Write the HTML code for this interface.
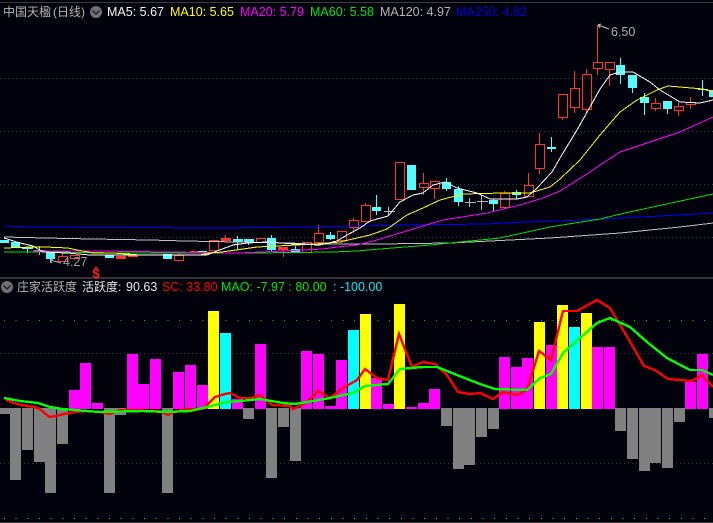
<!DOCTYPE html>
<html><head><meta charset="utf-8"><style>
html,body{margin:0;padding:0;background:#02020d;overflow:hidden}
svg{display:block}
text{font-family:"Liberation Sans","Noto Sans CJK SC",sans-serif;font-size:12.5px}
.c{font-size:12px}
.l{fill:none;shape-rendering:crispEdges}
.r{fill:#ff00ff}
</style></head><body>
<svg width="713" height="523" viewBox="0 0 713 523" xmlns="http://www.w3.org/2000/svg">
<rect width="713" height="523" fill="#02020d"/>
<g shape-rendering="crispEdges">
<rect x="0" y="2" width="713" height="1" fill="#3a3a3a"/>
<rect x="0" y="277" width="713" height="2" fill="#333"/>
<rect x="0" y="522" width="713" height="1" fill="#3a3a3a"/>
<path d="M0 78.5H713M0 131.5H713M0 184.5H713M0 237.5H713M0 353.5H713M0 463.5H713" stroke="#3c3c3c" stroke-dasharray="1 3" fill="none"/>
<path d="M4 320.500H713" stroke="#00e000" stroke-dasharray="1 10.67" fill="none"/>
<path d="M4 518.500H713" stroke="#00e8e8" stroke-dasharray="1 10.67" fill="none"/>
</g>
<!-- candles red -->
<g shape-rendering="crispEdges" fill="none" stroke="#ff3232">
<path d="M58.5 256.5h9v5h-9zM70.5 255.5h9v3h-9zM174.5 255.5h9v5h-9zM209.5 240.5h9v10h-9zM256.5 238.5h9v4h-9zM302.5 242.5h9v10h-9zM314.5 233.5h9v9h-9zM337.5 231.5h9v9h-9zM349.5 220.5h9v7h-9zM361.5 205.5h9v16h-9zM395.5 162.5h9v37h-9zM419.5 183.5h9v4h-9zM430.5 181.5h9v7h-9zM500.5 193.5h9v14h-9zM524.5 185.5h9v11h-9zM535.5 144.5h9v24h-9zM558.5 94.5h9v23h-9zM570.5 88.5h9v19h-9zM582.5 74.5h9v35h-9zM593.5 62.5h9v6h-9zM605.5 62.5h9v7h-9zM651.5 103.5h9v5h-9zM674.5 106.5h9v4h-9zM686.5 102.5h9v2h-9z"/>
<path d="M62.5 253v3M179 252v3M318.5 225v8M318.5 243v3M341.5 241v2M353.5 218v2M353.5 228v5M365.5 203v2M423.5 173v10M423.5 188v7M434.5 189v10M504.5 191v2M504.5 208v1M528.5 173v12M539.5 133v11M539.5 169v5M562.5 118v2M574.5 71v17M574.5 108v5M586.5 69v5M586.5 110v4M597.5 25v37M597.5 69v6M609.5 70v16M655.5 98v5M655.5 109v2M678.5 102v4M678.5 111v5M690.5 97v5M690.5 105v4"/>
</g>
<g shape-rendering="crispEdges" fill="#ff3232">
<rect x="116" y="256" width="10" height="3"/><rect x="128" y="255" width="10" height="2"/><rect x="190" y="251" width="9" height="2"/>
<rect x="221" y="238" width="10" height="3"/><rect x="225" y="235" width="1" height="7"/>
<rect x="278" y="247" width="10" height="3"/><rect x="283" y="250" width="1" height="7"/>
</g>
<!-- candles cyan -->
<g shape-rendering="crispEdges" fill="#54fcfc">
<rect x="0" y="240" width="9" height="3"/><rect x="11" y="242" width="9" height="6"/><rect x="22" y="247" width="11" height="2"/><rect x="27" y="247" width="1" height="6"/>
<rect x="46" y="252" width="9" height="7"/><rect x="50" y="259" width="1" height="4"/>
<rect x="105" y="255" width="9" height="3"/><rect x="163" y="254" width="9" height="5"/><rect x="198" y="251" width="9" height="2"/>
<rect x="233" y="239" width="10" height="3"/><rect x="237" y="236" width="1" height="13"/>
<rect x="244" y="239" width="10" height="3"/><rect x="248" y="242" width="1" height="3"/>
<rect x="267" y="238" width="9" height="12"/><rect x="271" y="235" width="1" height="17"/>
<rect x="291" y="249" width="9" height="3"/><rect x="295" y="246" width="1" height="4"/>
<rect x="326" y="235" width="9" height="4"/><rect x="330" y="232" width="1" height="8"/>
<rect x="372" y="207" width="9" height="4"/><rect x="376" y="195" width="1" height="20"/>
<rect x="407" y="165" width="9" height="25"/>
<rect x="442" y="182" width="9" height="7"/><rect x="446" y="178" width="1" height="13"/>
<rect x="454" y="189" width="9" height="13"/><rect x="458" y="186" width="1" height="20"/>
<rect x="489" y="200" width="9" height="4"/><rect x="493" y="199" width="1" height="12"/>
<rect x="512" y="192" width="9" height="3"/><rect x="516" y="190" width="1" height="9"/>
<rect x="547" y="147" width="9" height="2"/><rect x="551" y="137" width="1" height="15"/>
<rect x="616" y="65" width="9" height="10"/><rect x="620" y="58" width="1" height="26"/>
<rect x="628" y="75" width="9" height="13"/><rect x="632" y="88" width="1" height="5"/>
<rect x="640" y="97" width="9" height="6"/><rect x="644" y="93" width="1" height="22"/>
<rect x="663" y="101" width="9" height="8"/><rect x="667" y="109" width="1" height="5"/>
<rect x="698" y="89" width="10" height="1"/><rect x="702" y="80" width="1" height="16"/>
<rect x="709" y="90" width="4" height="7"/>
</g>
<g shape-rendering="crispEdges" fill="#b8b8b8">
<rect x="34" y="250" width="11" height="1"/><rect x="39" y="246" width="1" height="9"/>
<rect x="384" y="211" width="11" height="1"/><rect x="388" y="207" width="1" height="9"/>
<rect x="465" y="202" width="11" height="1"/><rect x="469" y="198" width="1" height="9"/>
<rect x="477" y="201" width="11" height="1"/><rect x="481" y="195" width="1" height="15"/>
</g>
<!-- MAs -->
<polyline class="l" stroke="#0000ff" stroke-width="1" points="4,226 30,227 220,228 303,227 360,226 405,225 487,224 523,222 560,221 600,219 660,216 713,213"/>
<polyline class="l" stroke="#c0c0c0" stroke-width="1" points="4,237 45,238 92,239 150,240 185,241 290,243 310,244 380,244 450,243 550,238 620,233 650,230 680,227 713,223"/>
<polyline class="l" stroke="#00e000" stroke-width="1" points="4,252 53,252 120,253 253,253 333,252 357,251 380,249 430,245 500,238 550,227 600,219 625,213 713,194"/>
<polyline class="l" stroke="#ff00ff" stroke-width="1" points="33,251 100,251 167,252 240,253 303,250 323,249 337,247 357,245 377,240 413,229 443,220 487,213 520,205 543,198 560,191 590,172 600,165 620,152 650,142 680,132 713,117"/>
<polyline class="l" stroke="#ffff00" stroke-width="1" points="4,248 33,247 45,247 68,248 77,250 93,253 113,253 140,255 200,255 210,253 222,252 243,249 257,247 277,246 315,244 340,242 357,238 370,235 387,229 397,222 407,215 423,208 440,200 463,194 503,193 530,193 550,187 560,179 580,160 600,135 620,112 637,100 657,90 668,86 703,89 713,92"/>
<polyline class="l" stroke="#ffffff" stroke-width="1" points="4,238 20,243 33,246 43,252 67,253 90,255 167,255 207,255 217,251 233,245 247,243 267,242 295,244 320,245 337,241 347,235 360,228 370,221 388,216 400,202 413,195 423,193 433,185 445,182 457,188 477,193 490,199 517,199 527,197 537,188 552,172 560,158 577,130 590,107 600,89 610,75 620,72 633,72 650,82 660,90 680,102 700,103 713,100"/>
<!-- sub bars -->
<g shape-rendering="crispEdges">
<g fill="#808080">
<rect x="0" y="408" width="10" height="6"/><rect x="10" y="408" width="11" height="72"/><rect x="22" y="408" width="11" height="42"/><rect x="34" y="408" width="11" height="54"/><rect x="45" y="408" width="11" height="85"/><rect x="57" y="408" width="11" height="36"/>
<rect x="104" y="408" width="11" height="85"/><rect x="115" y="408" width="11" height="7"/><rect x="162" y="408" width="11" height="85"/>
<rect x="243" y="408" width="11" height="11"/><rect x="266" y="408" width="11" height="70"/><rect x="278" y="408" width="11" height="19"/><rect x="290" y="408" width="11" height="53"/>
<rect x="441" y="408" width="11" height="18"/><rect x="453" y="408" width="11" height="61"/><rect x="464" y="408" width="11" height="57"/><rect x="476" y="408" width="11" height="29"/><rect x="488" y="408" width="11" height="21"/>
<rect x="615" y="408" width="11" height="23"/><rect x="627" y="408" width="11" height="51"/><rect x="639" y="408" width="11" height="63"/><rect x="650" y="408" width="11" height="55"/><rect x="662" y="408" width="11" height="60"/><rect x="674" y="408" width="11" height="14"/><rect x="709" y="408" width="4" height="10"/>
</g>
<g fill="#ff00ff">
<rect x="69" y="390" width="11" height="19"/><rect x="80" y="363" width="11" height="46"/><rect x="92" y="403" width="11" height="6"/>
<rect x="127" y="354" width="11" height="55"/><rect x="138" y="384" width="11" height="25"/><rect x="150" y="359" width="11" height="50"/>
<rect x="173" y="372" width="11" height="37"/><rect x="185" y="365" width="11" height="44"/><rect x="197" y="385" width="11" height="24"/>
<rect x="232" y="399" width="11" height="10"/><rect x="255" y="344" width="11" height="65"/>
<rect x="301" y="351" width="11" height="58"/><rect x="313" y="354" width="11" height="55"/><rect x="325" y="406" width="11" height="3"/><rect x="336" y="360" width="11" height="49"/>
<rect x="371" y="378" width="11" height="31"/><rect x="383" y="404" width="11" height="5"/><rect x="406" y="407" width="11" height="2"/><rect x="418" y="403" width="11" height="6"/><rect x="429" y="389" width="11" height="20"/>
<rect x="499" y="357" width="11" height="52"/><rect x="511" y="367" width="11" height="42"/><rect x="522" y="358" width="11" height="51"/><rect x="546" y="345" width="11" height="64"/>
<rect x="592" y="347" width="11" height="62"/><rect x="604" y="347" width="11" height="62"/>
<rect x="685" y="382" width="11" height="27"/><rect x="697" y="354" width="11" height="55"/>
</g>
<g fill="#ffff00">
<rect x="208" y="311" width="11" height="98"/><rect x="360" y="314" width="11" height="95"/><rect x="394" y="304" width="11" height="105"/><rect x="534" y="322" width="11" height="87"/><rect x="557" y="305" width="11" height="104"/><rect x="581" y="313" width="11" height="96"/>
</g>
<g fill="#00ffff">
<rect x="220" y="333" width="11" height="76"/><rect x="348" y="330" width="11" height="79"/><rect x="569" y="327" width="11" height="82"/>
</g>
</g>
<polyline class="l" stroke="#ff0000" stroke-width="2.4" points="6,400 14,403 22,405 34,407 40,409 48,416 50,417 56,416 64,414 75,412 85,411 100,412 110,414 120,410 130,410 160,411 168,415 176,411 190,409 203,409 215,397 225,394 230,393 240,398 252,398 260,395 272,405 290,406 293,409 306,403 318,391 330,398 343,388 357,380 365,369 377,378 388,380 399,334 412,367 423,362 435,364 447,375 458,392 470,394 480,393 493,399 503,392 517,395 527,390 539,351 551,360 563,311 577,311 597,300 610,308 622,328 633,347 644,366 655,370 668,379 680,380 692,381 702,375 713,387"/>
<polyline class="l" stroke="#00ff00" stroke-width="2.4" points="4,398 20,401 38,403 50,407 62,409 100,412 143,411 167,412 190,411 207,407 227,402 240,401 260,399 283,403 295,404 307,402 330,398 353,393 365,386 388,384 400,369 423,367 437,367 457,375 480,384 495,389 527,390 540,378 551,374 563,353 580,338 597,323 610,318 630,327 647,342 667,358 690,370 702,370 713,375"/>
<!-- price labels -->
<path d="M598 25l11 4M598 25l3-1M598 25l2 3" stroke="#c0c0c0" fill="none"/>
<text x="611" y="36" fill="#b0b0b0">6.50</text>
<path d="M50 260l11 3M50 260l3-1M50 260l2 3" stroke="#b0b0b0" fill="none"/>
<text x="63" y="266" fill="#a0a0a0">4.27</text>
<path d="M94 269l2-2 2 2" stroke="#ff2020" fill="none"/>
<text x="92.500" y="278" fill="#ff2020" font-weight="bold" style="font-size:13px">$</text>
<!-- header -->
<text x="3" y="16" fill="#b4b4b4" class="c">中国天楹</text>
<text x="53" y="16" fill="#b4b4b4" class="c">(日线)</text>
<circle cx="96" cy="12" r="6" fill="#707070"/><path d="M92.5 10.5l3.5 3.5 3.5-3.5" stroke="#222" stroke-width="1.4" fill="none"/>
<text x="107" y="16" fill="#f4f4f4">MA5: 5.67</text>
<text x="170" y="16" fill="#ffff00">MA10: 5.65</text>
<text x="240" y="16" fill="#ff00ff">MA20: 5.79</text>
<text x="310" y="16" fill="#00e800">MA60: 5.58</text>
<text x="380" y="16" fill="#b4b4b4">MA120: 4.97</text>
<text x="456" y="16" fill="#0000e0">MA250: 4.82</text>
<!-- sub header -->
<circle cx="7" cy="287" r="6" fill="#707070"/><path d="M3.500 285.500l3.500 3.500 3.500-3.500" stroke="#222" stroke-width="1.4" fill="none"/>
<text x="17" y="291" fill="#b4b4b4" class="c">庄家活跃度</text>
<text x="82" y="291" fill="#e8e8e8" class="c">活跃度:</text>
<text x="126" y="291" fill="#e8e8e8">90.63</text>
<text x="162" y="291" fill="#ff0000">SC: 33.80</text>
<text x="221" y="291" fill="#00e800">MAO: -7.97 : 80.00</text>
<text x="333" y="291" fill="#00f0f0">: -100.00</text>
</svg>
</body></html>
